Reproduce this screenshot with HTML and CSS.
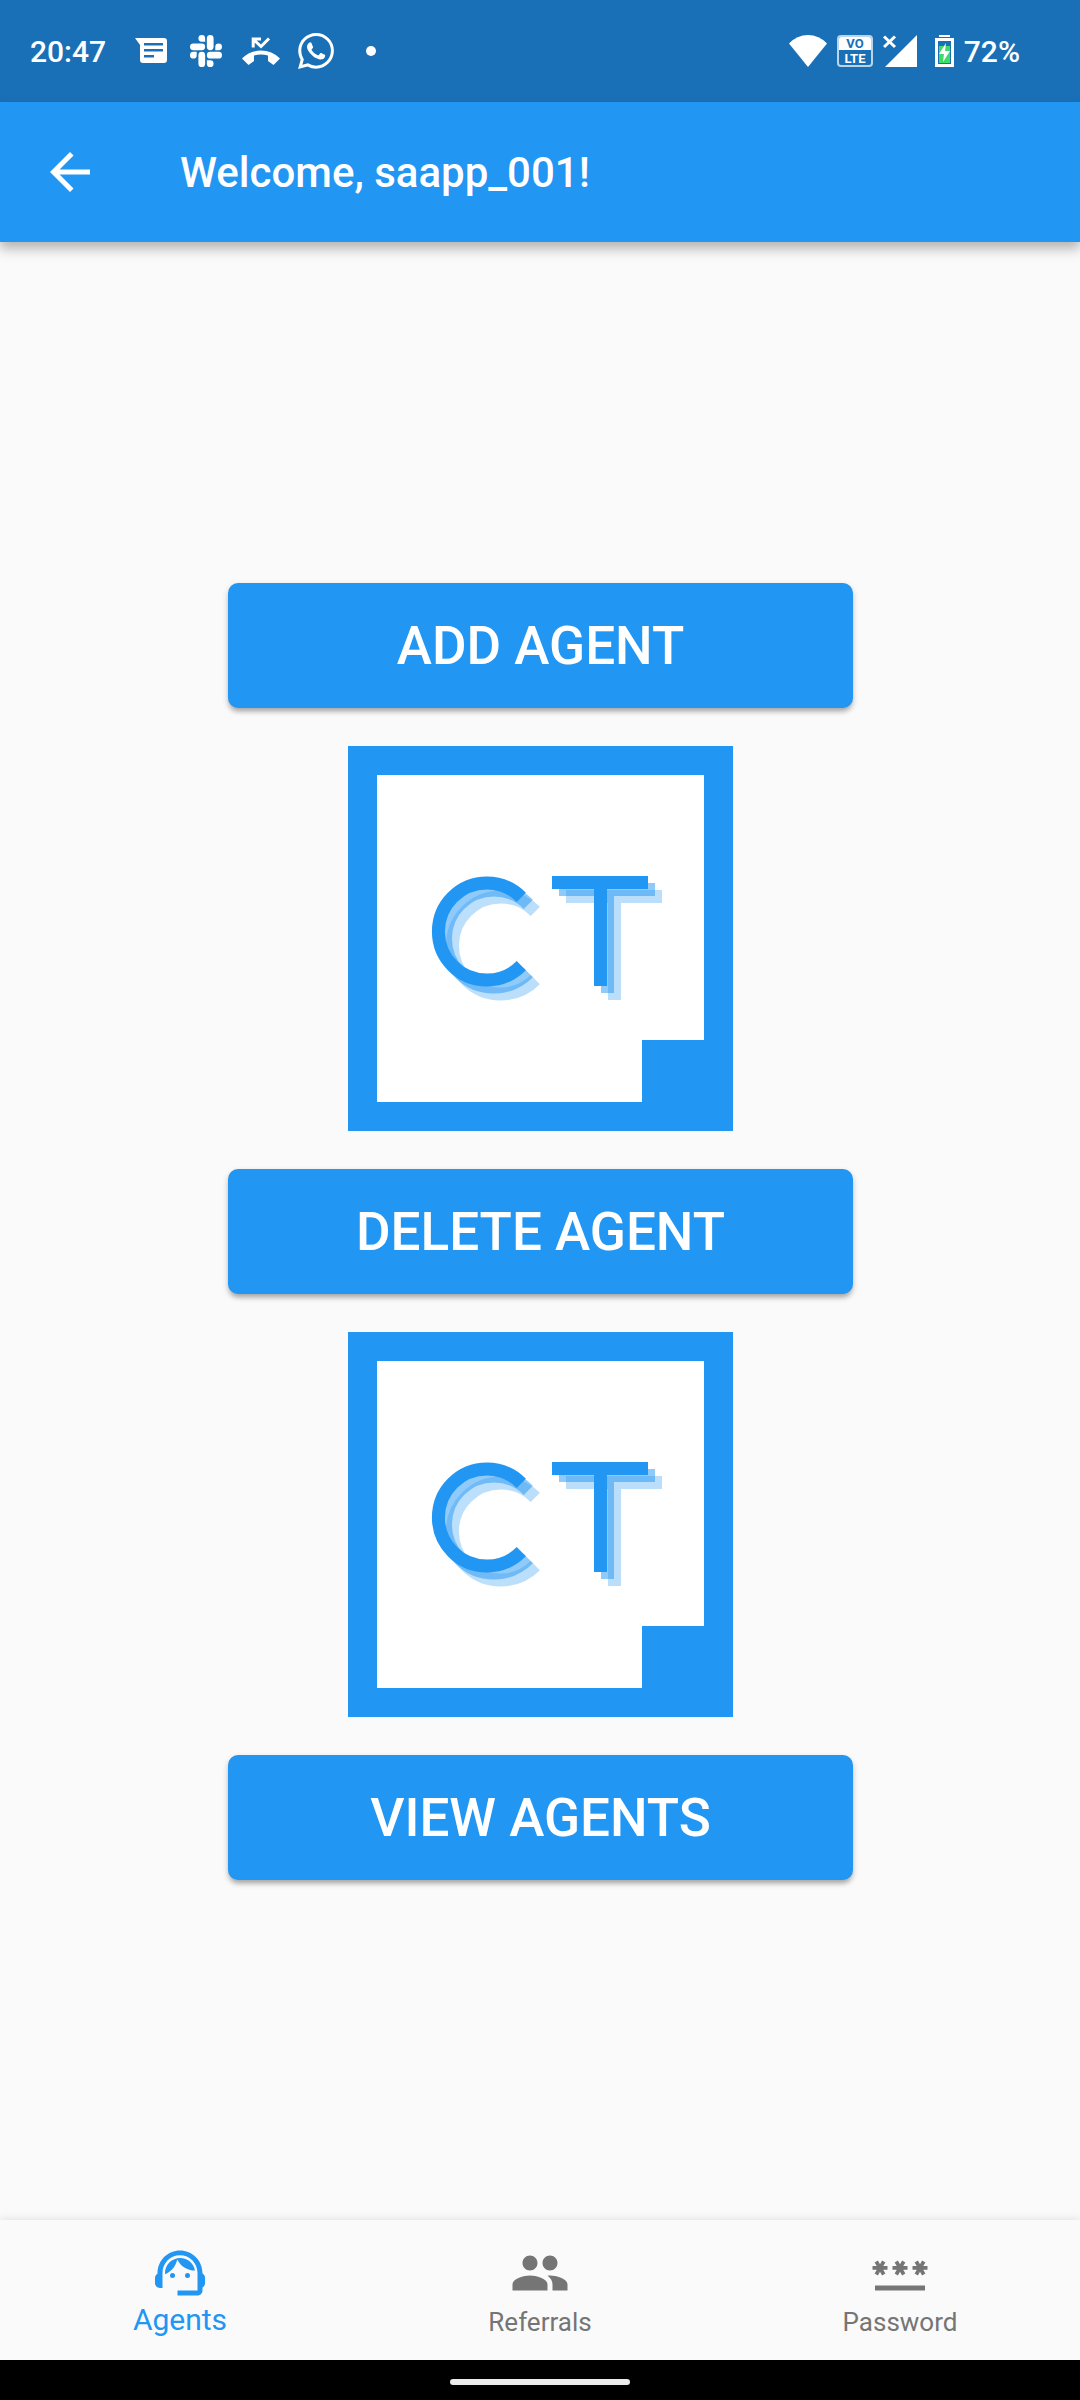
FILE: index.html
```html
<!DOCTYPE html>
<html lang="en">
<head>
<meta charset="utf-8">
<meta name="viewport" content="width=device-width, initial-scale=1">
<title>Agents</title>
<link rel="stylesheet" href="styles.css">
</head>
<body>
<svg class="defs" aria-hidden="true">
  <defs>
    <g id="ct-letters" fill="none" stroke="#2196f3" stroke-width="13">
      <path d="M173.300 151.300A48.500 48.500 0 1 0 173.300 219.700"/>
      <path d="M204 136.500H300M252.500 143V240"/>
    </g>
    <symbol id="ct-logo" viewBox="0 0 385 385">
      <path fill="#2196f3" d="M0 0H385V385H0z"/>
      <path fill="#fff" d="M29 29H356V294H294V356H29z"/>
      <use href="#ct-letters" transform="translate(14 14)" opacity=".3"/>
      <use href="#ct-letters" transform="translate(7 7)" opacity=".5"/>
      <use href="#ct-letters"/>
    </symbol>
  </defs>
</svg>

<div class="screen">
  <div class="status-bar">
    <span class="clock">20:47</span>
    <div class="notifications">
      <span class="cell"><svg width="32" height="26" viewBox="0 0 32 26" fill="#fff"><path fill-rule="evenodd" d="M0 0H29Q32 0 32 3V22Q32 25 29 25H8Q5 25 5 22V7zM9 5V7.500H28V5zM9 11V13.500H28V11zM9 17V19.500H19V17z"/></svg></span>
      <span class="cell"><svg width="32" height="32" viewBox="0 0 24 24" fill="#fff">
        <defs><path id="slack-arm" d="M5.042 15.165a2.528 2.528 0 0 1-2.520 2.523A2.528 2.528 0 0 1 0 15.165a2.527 2.527 0 0 1 2.522-2.520h2.520zM6.313 15.165a2.527 2.527 0 0 1 2.521-2.520 2.527 2.527 0 0 1 2.521 2.520v6.313A2.528 2.528 0 0 1 8.834 24a2.528 2.528 0 0 1-2.521-2.522z"/></defs>
        <use href="#slack-arm"/><use href="#slack-arm" transform="rotate(90 12 12)"/><use href="#slack-arm" transform="rotate(180 12 12)"/><use href="#slack-arm" transform="rotate(270 12 12)"/>
      </svg></span>
      <span class="cell"><svg width="38" height="28" viewBox="0 0 38 28" fill="#fff"><path d="M0 21.500Q8 13.500 19 13.500T38 21.500L31.500 28L26 24V18.500Q19 16.500 12 18.500V24L6.500 28z"/><path fill="none" stroke="#fff" stroke-width="3" d="M19 2H11.200V10.500M11.500 2.500L19 9.500L27 1.500"/></svg></span>
      <span class="cell"><svg width="36" height="36" viewBox="0 0 24 24" fill="#fff"><path d="M17.472 14.382c-.297-.149-1.758-.867-2.030-.967-.273-.099-.471-.148-.670.150-.197.297-.767.966-.940 1.164-.173.199-.347.223-.644.075-.297-.150-1.255-.463-2.390-1.475-.883-.788-1.480-1.761-1.653-2.059-.173-.297-.018-.458.130-.606.134-.133.298-.347.446-.520.149-.174.198-.298.298-.497.099-.198.050-.371-.025-.520-.075-.149-.669-1.612-.916-2.207-.242-.579-.487-.500-.669-.510-.173-.008-.371-.010-.570-.010-.198 0-.520.074-.792.372-.272.297-1.040 1.016-1.040 2.479 0 1.462 1.065 2.875 1.213 3.074.149.198 2.096 3.200 5.077 4.487.709.306 1.262.489 1.694.625.712.227 1.360.195 1.871.118.571-.085 1.758-.719 2.006-1.413.248-.694.248-1.289.173-1.413-.074-.124-.272-.198-.570-.347m-5.421 7.403h-.004a9.870 9.870 0 01-5.031-1.378l-.361-.214-3.741.982.998-3.648-.235-.374a9.860 9.860 0 01-1.510-5.260c.001-5.450 4.436-9.884 9.888-9.884 2.640 0 5.122 1.030 6.988 2.898a9.825 9.825 0 012.893 6.994c-.003 5.450-4.437 9.884-9.885 9.884m8.413-18.297A11.815 11.815 0 0012.050 0C5.495 0 .160 5.335.157 11.892c0 2.096.547 4.142 1.588 5.945L.057 24l6.305-1.654a11.882 11.882 0 005.683 1.448h.005c6.554 0 11.890-5.335 11.893-11.893a11.821 11.821 0 00-3.480-8.413z"/></svg></span>
      <span class="cell"><span class="dot"></span></span>
    </div>
    <div class="indicators">
      <svg width="38" height="32" viewBox="0 0 38 32" fill="#fff"><path d="M0 8.500Q8 0 19 0T38 8.500L19 32z"/></svg>
      <svg width="36" height="32" viewBox="0 0 36 32"><rect x="1" y="1" width="34" height="30" rx="3" fill="none" stroke="#fff" stroke-opacity=".7" stroke-width="2"/><path fill="#fff" d="M2 4Q2 2 4 2H32Q34 2 34 4V15H2z"/><text class="vo" x="18" y="13">VO</text><text class="lte" x="18" y="28">LTE</text></svg>
      <svg width="34" height="32" viewBox="0 0 34 32" fill="#fff"><path d="M34 0V32H2z"/><path fill="none" stroke="#fff" stroke-width="3" d="M1 1.500L12 12M12 1.500L1 12"/></svg>
      <svg class="battery" width="19" height="32" viewBox="0 0 19 32"><path fill="#fff" d="M4 0H15V2H4z"/><rect x="1.500" y="4.500" width="16" height="26" fill="none" stroke="#fff" stroke-width="3"/><path fill="#3ddc68" d="M4 11H15V28H4z"/><path fill="#fff" d="M11 8L4 19H9L8 27L15 16H10z"/></svg>
      <span class="level">72%</span>
    </div>
  </div>

  <header class="app-bar">
    <button class="back" type="button" aria-label="Back"><svg width="60" height="60" viewBox="0 0 24 24" fill="#fff"><path d="M20 11H7.830l5.590-5.590L12 4l-8 8 8 8 1.410-1.410L7.830 13H20v-2z"/></svg></button>
    <h1 class="title">Welcome, saapp_001!</h1>
  </header>

  <main class="actions">
    <button class="action" type="button">ADD AGENT</button>
    <svg class="logo" role="img" aria-label="CT"><use href="#ct-logo"/></svg>
    <button class="action" type="button">DELETE AGENT</button>
    <svg class="logo" role="img" aria-label="CT"><use href="#ct-logo"/></svg>
    <button class="action" type="button">VIEW AGENTS</button>
  </main>

  <nav class="tabs">
    <a class="tab active" href="#agents" aria-current="page"><svg width="60" height="60" viewBox="0 0 24 24"><path d="M21 12.220C21 6.730 16.740 3 12 3c-4.690 0-9 3.650-9 9.280-.600.340-1 .980-1 1.720v2c0 1.100.900 2 2 2h1v-6.100c0-3.870 3.130-7 7-7s7 3.130 7 7V19h-8v2h8c1.100 0 2-.900 2-2v-1.220c.590-.310 1-.920 1-1.640v-2.300c0-.700-.410-1.310-1-1.620z"/><circle cx="9" cy="13" r="1"/><circle cx="15" cy="13" r="1"/><path d="M18 11.030C17.520 8.180 15.040 6 12.050 6c-3.030 0-6.290 2.510-6.030 6.450 2.470-1.010 4.330-3.210 4.860-5.890 1.310 2.630 4 4.440 7.120 4.470z"/></svg><span>Agents</span></a>
    <a class="tab" href="#referrals"><svg width="60" height="60" viewBox="0 0 24 24"><path d="M16 11c1.660 0 2.990-1.340 2.990-3S17.660 5 16 5s-3 1.340-3 3 1.340 3 3 3zm-8 0c1.660 0 2.990-1.340 2.990-3S9.660 5 8 5 5 6.340 5 8s1.340 3 3 3zm0 2c-2.330 0-7 1.170-7 3.500V19h14v-2.500c0-2.330-4.670-3.500-7-3.500zm8 0c-.290 0-.620.020-.970.050 1.160.840 1.970 1.970 1.970 3.450V19h6v-2.500c0-2.330-4.670-3.500-7-3.500z"/></svg><span>Referrals</span></a>
    <a class="tab" href="#password"><svg width="60" height="60" viewBox="0 0 24 24"><defs><path id="star" d="M3.150 12.950L4 11.470l.850 1.480 1.300-.750-.850-1.480H7v-1.500H5.300l.850-1.470L4.850 7 4 8.470 3.150 7l-1.300.750.850 1.470H1v1.500h1.700l-.850 1.480z"/></defs><path d="M2 17h20v2H2z"/><use href="#star"/><use href="#star" x="8"/><use href="#star" x="16"/></svg><span>Password</span></a>
  </nav>

  <div class="system-bar"><span class="handle"></span></div>
</div>
</body>
</html>
```
FILE: styles.css
```css
* { box-sizing: border-box; }

body {
  margin: 0;
  background: #fafafa;
  font-family: Roboto, "Liberation Sans", sans-serif;
}

svg { display: block; flex: none; }
.defs { position: absolute; width: 0; height: 0; }

.screen {
  display: flex;
  flex-direction: column;
  min-height: 100vh;
}

.status-bar {
  display: flex;
  align-items: center;
  height: 102px;
  padding: 0 60px 0 30px;
  background: #1a70b7;
  color: #fff;
  font-size: 30px;
  font-weight: 500;
}

.clock { width: 93px; }

.notifications { display: flex; height: 36px; }

.cell {
  display: flex;
  align-items: center;
  justify-content: center;
  width: 55px;
}

.dot {
  width: 10px;
  height: 10px;
  border-radius: 50%;
  background: #fff;
}

.indicators {
  display: flex;
  align-items: center;
  gap: 10px;
  margin-left: auto;
}

.battery { margin-left: 8px; }

.vo, .lte {
  font-size: 13px;
  font-weight: 700;
  text-anchor: middle;
}
.vo { fill: #1a70b7; }
.lte { fill: #fff; }

.app-bar {
  display: flex;
  align-items: center;
  gap: 80px;
  height: 140px;
  padding: 0 40px;
  background: #2196f3;
  color: #fff;
  box-shadow: 0 5px 10px rgba(0, 0, 0, 0.2), 0 10px 12px rgba(0, 0, 0, 0.1);
}

.back {
  padding: 0;
  border: 0;
  background: none;
}

.title {
  margin: 0;
  font-size: 42px;
  font-weight: 500;
}

.actions {
  display: flex;
  flex: 1;
  flex-direction: column;
  align-items: center;
  justify-content: center;
  gap: 38px;
  padding: 1px 0 0 1px;
}

.action {
  width: 625px;
  max-width: 100%;
  height: 125px;
  padding: 0;
  border: 0;
  border-radius: 10px;
  background: #2196f3;
  color: #fff;
  font: 500 53px Roboto, "Liberation Sans", sans-serif;
  box-shadow: 0 5px 5px -2px rgba(0, 0, 0, 0.2), 0 3px 6px rgba(0, 0, 0, 0.2);
}

.logo { width: 385px; height: 385px; }

.tabs {
  display: grid;
  grid-template-columns: repeat(3, 1fr);
  height: 140px;
  background: #fafafa;
  box-shadow: 0 -1px 8px rgba(0, 0, 0, 0.1);
}

.tab {
  display: flex;
  flex-direction: column;
  align-items: center;
  padding-top: 23px;
  color: #757575;
  fill: currentColor;
  font-size: 26px;
  line-height: 38px;
  text-decoration: none;
}

.active {
  color: #2196f3;
  font-size: 30px;
  line-height: 34px;
}

.system-bar {
  display: flex;
  align-items: center;
  justify-content: center;
  height: 40px;
  padding-top: 4px;
  background: #000;
}

.handle {
  width: 180px;
  height: 6px;
  border-radius: 3px;
  background: #ececec;
}
```
